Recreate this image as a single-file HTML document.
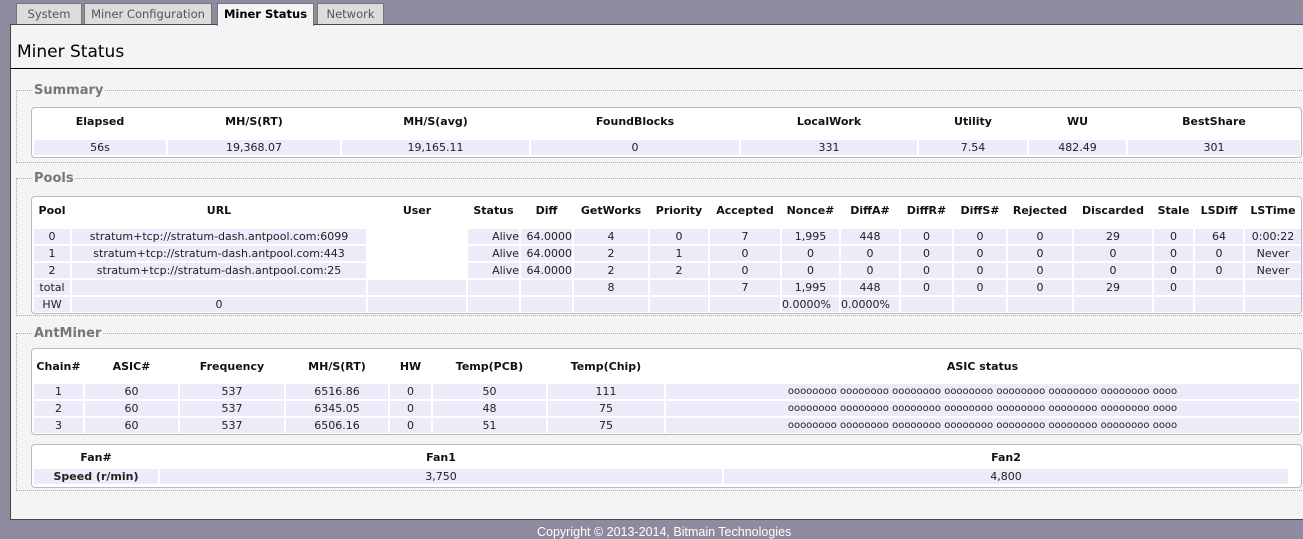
<!DOCTYPE html>
<html><head><meta charset="utf-8"><style>
*{margin:0;padding:0;box-sizing:border-box}
body{width:1303px;height:539px;background:#8f8b9f;font-family:"DejaVu Sans","Liberation Sans",sans-serif;font-size:11px;color:#222;position:relative;overflow:hidden}
.tab{position:absolute;top:3px;height:22px;background:#dcdcdc;border:1px solid #777;border-bottom:none;color:#555;font-size:11.5px;line-height:20px;text-align:center}
.tab.a{background:#f4f4f4;color:#000;font-weight:bold;height:22px}
#panel{position:absolute;left:10px;top:24px;width:1310px;height:496px;background:#f4f4f4;border:1px solid #444;border-right:none}
h1{position:absolute;left:17px;top:42px;font-size:17px;font-weight:normal;color:#000;font-family:"DejaVu Sans",sans-serif}
#rule{position:absolute;left:10px;top:68px;width:1300px;height:1px;background:#000}
.fs{position:absolute;left:16px;width:1300px;border:1px dotted #aaa;border-right:none}
.lg{position:absolute;left:33px;font-weight:bold;font-size:13px;color:#777;background:#f4f4f4;padding:0 1px;line-height:13px}
.tw{position:absolute;left:31px;width:1271px;background:#fff;border:1px solid #bbb;border-radius:4px}
table{border-collapse:separate;border-spacing:2px 2px;table-layout:fixed;width:100%}
th{font-weight:bold;text-align:center;white-space:nowrap;overflow:hidden;color:#111}
.top th{vertical-align:top;padding-top:5px}
td{background:#ebebf9;text-align:center;white-space:nowrap;overflow:hidden;height:15px;line-height:15px;padding:0}
td.w{background:#fff}
.foot{position:absolute;left:537px;top:525px;color:#fff;font-size:12.5px;font-family:"Liberation Sans",sans-serif}
</style></head><body>
<div class="tab" style="left:16px;width:66px">System</div>
<div class="tab" style="left:84px;width:128px">Miner Configuration</div>
<div class="tab" style="left:317px;width:67px">Network</div>
<div id="panel"></div>
<div class="tab a" style="left:217px;width:97px;height:23px">Miner Status</div>
<h1>Miner Status</h1>
<div id="rule"></div>

<div class="fs" style="top:90px;height:73px"></div>
<div class="lg" style="top:84px">Summary</div>
<div class="tw" style="top:107px;height:51px">
<table>
<colgroup><col style="width:132px"><col style="width:172px"><col style="width:187px"><col style="width:208px"><col style="width:176px"><col style="width:108px"><col style="width:97px"><col style="width:172px"></colgroup>
<tr class="top" style="height:28px"><th>Elapsed</th><th>MH/S(RT)</th><th>MH/S(avg)</th><th>FoundBlocks</th><th>LocalWork</th><th>Utility</th><th>WU</th><th>BestShare</th></tr>
<tr><td>56s</td><td>19,368.07</td><td>19,165.11</td><td>0</td><td>331</td><td>7.54</td><td>482.49</td><td>301</td></tr>
</table></div>

<div class="fs" style="top:178px;height:138px"></div>
<div class="lg" style="top:172px">Pools</div>
<div class="tw" style="top:196px;height:118px">
<table>
<colgroup><col style="width:36px"><col style="width:294px"><col style="width:98px"><col style="width:51px"><col style="width:51px"><col style="width:74px"><col style="width:58px"><col style="width:70px"><col style="width:57px"><col style="width:58px"><col style="width:51px"><col style="width:52px"><col style="width:64px"><col style="width:78px"><col style="width:39px"><col style="width:48px"><col style="width:56px"></colgroup>
<tr class="top" style="height:28px"><th>Pool</th><th>URL</th><th>User</th><th>Status</th><th>Diff</th><th>GetWorks</th><th>Priority</th><th>Accepted</th><th>Nonce#</th><th>DiffA#</th><th>DiffR#</th><th>DiffS#</th><th>Rejected</th><th>Discarded</th><th>Stale</th><th>LSDiff</th><th>LSTime</th></tr>
<tr><td>0</td><td>stratum+tcp://stratum-dash.antpool.com:6099</td><td class="w"></td><td style="text-align:right">Alive</td><td style="text-align:right">64.0000</td><td>4</td><td>0</td><td>7</td><td>1,995</td><td>448</td><td>0</td><td>0</td><td>0</td><td>29</td><td>0</td><td>64</td><td>0:00:22</td></tr>
<tr><td>1</td><td>stratum+tcp://stratum-dash.antpool.com:443</td><td class="w"></td><td style="text-align:right">Alive</td><td style="text-align:right">64.0000</td><td>2</td><td>1</td><td>0</td><td>0</td><td>0</td><td>0</td><td>0</td><td>0</td><td>0</td><td>0</td><td>0</td><td>Never</td></tr>
<tr><td>2</td><td>stratum+tcp://stratum-dash.antpool.com:25</td><td class="w"></td><td style="text-align:right">Alive</td><td style="text-align:right">64.0000</td><td>2</td><td>2</td><td>0</td><td>0</td><td>0</td><td>0</td><td>0</td><td>0</td><td>0</td><td>0</td><td>0</td><td>Never</td></tr>
<tr><td>total</td><td></td><td></td><td></td><td></td><td>8</td><td></td><td>7</td><td>1,995</td><td>448</td><td>0</td><td>0</td><td>0</td><td>29</td><td>0</td><td></td><td></td></tr>
<tr><td>HW</td><td>0</td><td></td><td></td><td></td><td></td><td></td><td></td><td style="text-align:left">0.0000%</td><td style="text-align:left">0.0000%</td><td></td><td></td><td></td><td></td><td></td><td></td><td></td></tr>
</table></div>

<div class="fs" style="top:333px;height:158px"></div>
<div class="lg" style="top:327px">AntMiner</div>
<div class="tw" style="top:348px;height:87px">
<table>
<colgroup><col style="width:49px"><col style="width:93px"><col style="width:104px"><col style="width:102px"><col style="width:41px"><col style="width:113px"><col style="width:116px"><col style="width:633px"></colgroup>
<tr style="height:31px"><th>Chain#</th><th>ASIC#</th><th>Frequency</th><th>MH/S(RT)</th><th>HW</th><th>Temp(PCB)</th><th>Temp(Chip)</th><th>ASIC status</th></tr>
<tr><td>1</td><td>60</td><td>537</td><td>6516.86</td><td>0</td><td>50</td><td>111</td><td style="font-size:10px">oooooooo oooooooo oooooooo oooooooo oooooooo oooooooo oooooooo oooo</td></tr>
<tr><td>2</td><td>60</td><td>537</td><td>6345.05</td><td>0</td><td>48</td><td>75</td><td style="font-size:10px">oooooooo oooooooo oooooooo oooooooo oooooooo oooooooo oooooooo oooo</td></tr>
<tr><td>3</td><td>60</td><td>537</td><td>6506.16</td><td>0</td><td>51</td><td>75</td><td style="font-size:10px">oooooooo oooooooo oooooooo oooooooo oooooooo oooooooo oooooooo oooo</td></tr>
</table></div>

<div class="tw" style="top:444px;height:44px">
<table style="width:1258px">
<colgroup><col style="width:124px"><col style="width:562px"><col style="width:564px"></colgroup>
<tr style="height:20px"><th>Fan#</th><th>Fan1</th><th>Fan2</th></tr>
<tr><td style="font-weight:bold">Speed (r/min)</td><td>3,750</td><td>4,800</td></tr>
</table></div>

<div class="foot">Copyright © 2013-2014, Bitmain Technologies</div>
</body></html>
